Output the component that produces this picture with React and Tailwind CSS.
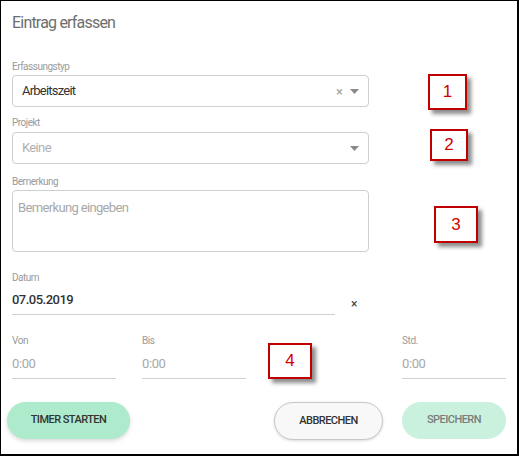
import React from "react";

const font = { fontFamily: "Roboto, 'Noto Sans', sans-serif" };

const Caret = () => (
  <svg width="9" height="5" viewBox="0 0 9 5" className="ml-[9px]">
    <path d="M0 0 L9 0 L4.5 5 Z" fill="#8a8a8a" />
  </svg>
);

const Marker = ({ n, className }) => (
  <div
    className={
      "absolute flex items-center justify-center border-2 border-[#c00000] bg-white text-[17px] text-[#d00000] shadow-[4px_4px_4px_rgba(0,0,0,0.45)] " +
      className
    }
    style={{ fontFamily: "'Liberation Sans', Arial, sans-serif" }}
  >
    {n}
  </div>
);

const TimeField = ({ label }) => (
  <div>
    <div className="h-[12px] text-[10px] leading-[12px] text-[#9a9a9a] tracking-[-0.04em]">
      {label}
    </div>
    <div className="mt-[9px] border-b border-[#cfcfcf] pb-[6px] text-[13px] leading-[16px] text-[#a8a8a8] tracking-[-0.03em]">
      0:00
    </div>
  </div>
);

const App = () => {
  return (
    <div
      className="relative h-[456px] w-[519px] border-l border-t border-r-2 border-b-2 border-black bg-white"
      style={font}
    >
      <div className="flex flex-col pl-[11px]">
        <h1 className="mt-[12px] h-[20px] text-[16px] leading-[20px] text-[#6e6e6e] tracking-[-0.05em]">
          Eintrag erfassen
        </h1>

        {/* Erfassungstyp */}
        <div className="mt-[28px] h-[12px] text-[10px] leading-[12px] text-[#9a9a9a] tracking-[-0.05em]">
          Erfassungstyp
        </div>
        <div className="mt-[2px] flex h-[32px] w-[357px] items-center rounded-[4px] border border-[#cfcfcf] pl-[9px] pr-[9px]">
          <span className="flex-1 text-[13px] text-[#333] tracking-[-0.06em]">
            Arbeitszeit
          </span>
          <span className="mr-[-2px] text-[13px] leading-none text-[#a0a0a0]">×</span>
          <Caret />
        </div>

        {/* Projekt */}
        <div className="mt-[10px] h-[12px] text-[10px] leading-[12px] text-[#9a9a9a] tracking-[-0.05em]">
          Projekt
        </div>
        <div className="mt-[3px] flex h-[32px] w-[357px] items-center rounded-[4px] border border-[#cfcfcf] pl-[9px] pr-[9px]">
          <span className="flex-1 text-[13px] text-[#b0b0b0] tracking-[-0.05em]">
            Keine
          </span>
          <Caret />
        </div>

        {/* Bemerkung */}
        <div className="mt-[12px] h-[12px] text-[10px] leading-[12px] text-[#9a9a9a] tracking-[-0.05em]">
          Bemerkung
        </div>
        <div className="mt-[2px] h-[62px] w-[357px] rounded-[4px] border border-[#cfcfcf] px-[5px] pt-[4px]">
          <span className="text-[13px] leading-[16px] text-[#a8a8a8] tracking-[-0.05em]">
            Bemerkung eingeben
          </span>
        </div>

        {/* Datum */}
        <div className="mt-[20px] h-[12px] text-[10px] leading-[12px] text-[#9a9a9a] tracking-[-0.05em]">
          Datum
        </div>
        <div className="mt-[8px] flex items-center">
          <div className="w-[323px] border-b border-[#cfcfcf] pb-[6px] text-[13px] font-medium leading-[16px] text-[#333] tracking-[-0.04em]">
            07.05.2019
          </div>
          <span className="ml-[16px] text-[12px] leading-none text-[#3a3a3a]">×</span>
        </div>

        {/* Zeiten */}
        <div className="mt-[20px] grid w-[494px] grid-cols-4 gap-x-[26px]">
          <TimeField label="Von" />
          <TimeField label="Bis" />
          <div />
          <TimeField label="Std." />
        </div>
      </div>

      {/* Buttons */}
      <div className="mt-[23px] flex pl-[6px] pr-[11px]">
        <button className="h-[37px] w-[123px] rounded-full bg-[#aeeacc] text-[11px] font-medium text-[#333] tracking-[-0.05em] shadow-[0_2px_4px_rgba(0,0,0,0.15)]">
          TIMER STARTEN
        </button>
        <div className="ml-auto flex gap-[19px]">
          <button className="h-[38px] w-[109px] rounded-full border border-[#c8c8c8] bg-[#f8f8f8] text-[11px] font-medium text-[#333] tracking-[-0.05em] shadow-[0_1px_3px_rgba(0,0,0,0.15)]">
            ABBRECHEN
          </button>
          <button className="h-[37px] w-[104px] rounded-full bg-[#caf1de] text-[11px] font-medium text-[#7c7c7c] tracking-[-0.05em]">
            SPEICHERN
          </button>
        </div>
      </div>

      {/* Annotationen */}
      <Marker n="1" className="left-[427px] top-[73px] h-[36px] w-[39px]" />
      <Marker n="2" className="left-[429px] top-[128px] h-[32px] w-[38px]" />
      <Marker n="3" className="left-[433px] top-[205px] h-[37px] w-[44px]" />
      <Marker n="4" className="left-[267px] top-[342px] h-[36px] w-[44px]" />
    </div>
  );
};

export default App;
